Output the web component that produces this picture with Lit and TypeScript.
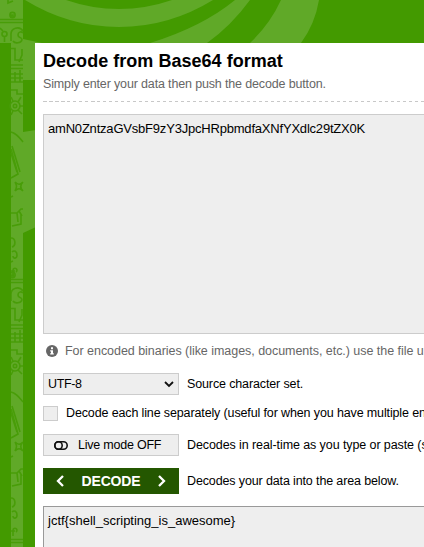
import { LitElement, html, css, svg } from "lit";
import { customElement } from "lit/decorators.js";

const doodles = () => svg`
  <path d="M0 19.5H23M0 22.5H23M8 0v3l5-2M11 18v-3h2v3"/>
  <circle cx="12.5" cy="15" r="2.6"/>
  <circle cx="4.5" cy="34" r="2.5"/>
  <path d="M0 28l3 3M4.5 37v5M11 41V35a6.5 6.5 0 0 1 12-4M13 41c2 3 8 2 9-1M18 35c0-3 3-4 5-2M18 35c0 4 4 1 4 5"/>
  <path d="M11 48.5H15V60H23M22 49v6L19 62M11 65H23M11 68.500H23M11 74H23M11 78H23M11 82H23M15 72v10M20 70v12"/>
  <circle cx="15" cy="106" r="5"/><circle cx="15" cy="106" r="1.700"/>
  <path d="M11 97l2 4M21 97l-3 5M20 106h3M18 110l4 4M13 111l-2 4M11 90h6v4h6"/>
  <path d="M11 132c5 1 8 5 12 10M12 146l8 26M11 153l6 19M11 178l7-4-7-25"/>
  <path d="M15 182c3 3 5 3 8 0M15 191c3-3 5-3 8 0M15 182c2 4 2 5 0 9M23 182c-3 3-3 6 0 9M11 197l2-1"/>
  <path d="M11 213h6l4-4h2M12 226l9-2v-9M17 213l1 9M19 211l3 5"/>
  <path d="M11 238c5 0 5 8 1 9M12 252c2-2 5-1 5 3s-4 4-4 1M13 276v-6a2 2 0 1 1 3 2M11 271h4"/>`;

const info = svg`<circle cx="6" cy="6" r="6" fill="#666"/>
  <path d="M5 2.300h2v2H5zM4.200 5.200H7v3h.8v1.300H4.200V8.200H5V6.500h-.8z" fill="#fff"/>`;

@customElement("app-root")
export class AppRoot extends LitElement {
  static styles = css`
    :host { display: block; position: relative; width: 424px; height: 547px; overflow: hidden; background: #439a00; font: 12.5px/16px "Liberation Sans", Arial, sans-serif; letter-spacing: -.13px; color: #000; }
    * { box-sizing: border-box; }
    .backdrop { position: absolute; inset: 0; display: block; }
    .panel { position: relative; margin: 43px 0 0 35px; width: 389px; height: 504px; padding: 8px 0 0 8px; background: #fff; overflow: hidden; }
    h1 { margin: 0; font-size: 18px; line-height: 21px; white-space: nowrap; letter-spacing: .03px; }
    .sub { margin-top: 4px; height: 17px; color: #666; white-space: nowrap; letter-spacing: -.15px; }
    .rule { display: block; height: 1px; margin-top: 8px; background: repeating-linear-gradient(90deg, #c8c8c8 0 3.500px, transparent 3.500px 6px); }
    .box { width: 500px; border: 1px solid #ccc; background: #eee; padding: 6px 4px; white-space: nowrap; font-size: 13px; }
    .input { height: 220px; margin-top: 12px; letter-spacing: -.2px; }
    .output { height: 100px; margin-top: 12px; border-color: #999; letter-spacing: 0; }
    .row { display: flex; align-items: center; white-space: nowrap; }
    .note { margin-top: 9px; height: 16px; padding-left: 3px; gap: 7px; color: #666; letter-spacing: -.04px; }
    .charset { margin-top: 14px; height: 22px; gap: 8px; }
    .each { margin-top: 10px; height: 16px; gap: 8px; }
    .live { margin-top: 13px; height: 22px; gap: 8px; letter-spacing: -.09px; }
    .go { margin-top: 12px; height: 26px; gap: 8px; }
    .control { flex: none; width: 136px; height: 22px; display: flex; align-items: center; border: 1px solid #ccc; background: #eee; padding: 0 4px; letter-spacing: -.22px; }
    .select { justify-content: space-between; letter-spacing: -.35px; }
    .check { flex: none; width: 15px; height: 15px; border: 1px solid #ccc; background: #eee; }
    .toggle { padding-left: 10px; gap: 10px; }
    .decode { flex: none; width: 136px; height: 26px; display: flex; align-items: center; justify-content: space-between; padding: 0 13px; background: #245700; color: #fff; font-weight: bold; font-size: 14px; }
    svg { display: block; flex: none; }
  `;

  render() {
    return html`
      <svg class="backdrop" width="424" height="547" viewBox="0 0 424 547">
        <g fill="#60a928">
          <path d="M0 0H23V547H11V43H0z"/>
          <path d="M25 0Q69 27 119 27Q169 27 213 0H172Q146 9 119 9Q92 9 66 0z"/>
          <path d="M23 39L42 43V80H23zM23 132L36 130V227L23 233z"/>
          <path d="M150 43Q202 27 235 0H250Q231 26 207 43zM281 0H319Q315 24 301 43H250Q270 24 281 0z"/>
        </g>
        <g fill="none" stroke="#489d08" stroke-width="1.600">${doodles()}</g>
        <svg x="11" y="260" width="12" height="287" viewBox="11 0 12 287">
          <g fill="none" stroke="#489d08" stroke-width="1.600">${doodles()}<path d="M11 279.500H23M11 282.500H23"/></g>
        </svg>
      </svg>
      <main class="panel">
        <h1>Decode from Base64 format</h1>
        <div class="sub">Simply enter your data then push the decode button.</div>
        <span class="rule"></span>
        <div class="box input">amN0ZntzaGVsbF9zY3JpcHRpbmdfaXNfYXdlc29tZX0K</div>
        <div class="row note"><svg width="12" height="12">${info}</svg><span>For encoded binaries (like images, documents, etc.) use the file up</span></div>
        <div class="row charset">
          <div class="control select"><span>UTF-8</span><svg width="10" height="7" viewBox="0 0 10 7"><path d="M1 1l4 4 4-4" fill="none" stroke="#111" stroke-width="1.800"/></svg></div>
          <span>Source character set.</span>
        </div>
        <div class="row each"><span class="check"></span><span>Decode each line separately (useful for when you have multiple en</span></div>
        <div class="row live">
          <div class="control toggle"><svg width="14" height="9" viewBox="0 0 14 9"><rect x=".8" y=".8" width="12.400" height="7.400" rx="3.700" fill="none" stroke="#111" stroke-width="1.600"/><circle cx="4.500" cy="4.500" r="3.700" fill="none" stroke="#111" stroke-width="1.600"/></svg><span>Live mode OFF</span></div>
          <span>Decodes in real-time as you type or paste (s</span>
        </div>
        <div class="row go">
          <div class="decode"><svg width="9" height="12" viewBox="0 0 9 12"><path d="M7 1L2 6l5 5" fill="none" stroke="#fff" stroke-width="2.300"/></svg><span>DECODE</span><svg width="9" height="12" viewBox="0 0 9 12"><path d="M2 1l5 5-5 5" fill="none" stroke="#fff" stroke-width="2.300"/></svg></div>
          <span>Decodes your data into the area below.</span>
        </div>
        <div class="box output">jctf{shell_scripting_is_awesome}</div>
      </main>`;
  }
}
